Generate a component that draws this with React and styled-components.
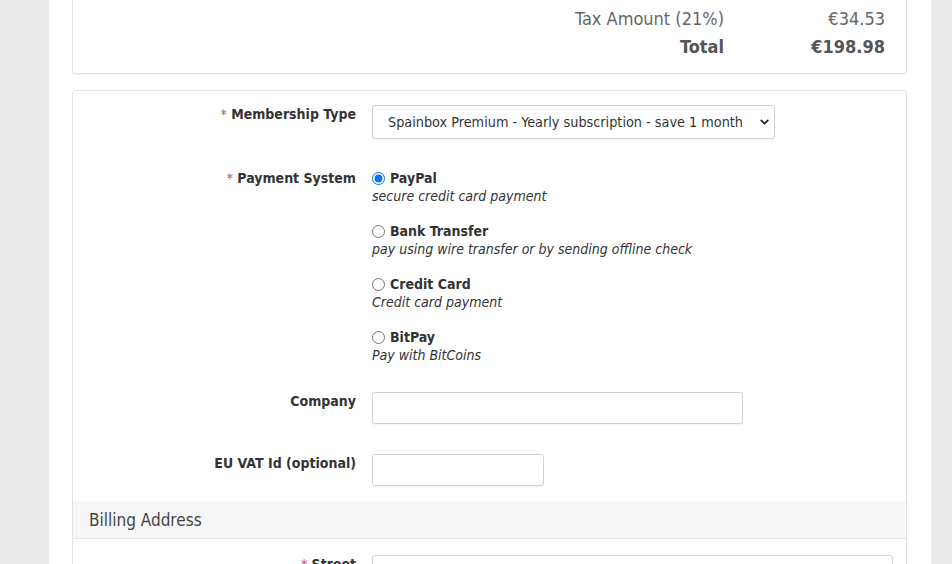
import React from 'react';
import styled, { createGlobalStyle } from 'styled-components';
import { ChevronDown } from 'lucide-react';

const GlobalStyle = createGlobalStyle`
    html, body {
        margin: 0;
        padding: 0;
        background-color: #ebebeb;
    }
    body {
        font-family: 'DejaVu Sans Condensed', 'DejaVu Sans', sans-serif;
        font-stretch: condensed;
        color: #333;
        overflow: hidden;
    }
`;

const summaryRows = [
    { label: 'Subtotal', value: '€164.45' },
    { label: 'Tax Amount (21%)', value: '€34.53' },
    { label: 'Total', value: '€198.98', strong: true },
];

const paymentOptions = [
    { id: 'paypal', title: 'PayPal', desc: 'secure credit card payment', checked: true },
    { id: 'bank', title: 'Bank Transfer', desc: 'pay using wire transfer or by sending offline check' },
    { id: 'cc', title: 'Credit Card', desc: 'Credit card payment' },
    { id: 'bitpay', title: 'BitPay', desc: 'Pay with BitCoins' },
];

const App = () => {
    return (
        <>
            <GlobalStyle />
            <Page>
                <Card>
                    <Summary>
                        {summaryRows.map((row) => (
                            <SummaryRow key={row.label} $strong={row.strong}>
                                <SummaryLabel>{row.label}</SummaryLabel>
                                <SummaryValue>{row.value}</SummaryValue>
                            </SummaryRow>
                        ))}
                    </Summary>
                </Card>

                <Card>
                    <FormBody $top={14}>
                        <FormRow>
                            <Label><Required>*</Required> Membership Type</Label>
                            <SelectWrap>
                                <Select defaultValue="yearly">
                                    <option value="yearly">Spainbox Premium - Yearly subscription - save 1 month</option>
                                    <option value="monthly">Spainbox Premium - Monthly subscription</option>
                                </Select>
                                <SelectArrow>
                                    <ChevronDown size={13} strokeWidth={3.2} />
                                </SelectArrow>
                            </SelectWrap>
                        </FormRow>

                        <FormRow>
                            <Label><Required>*</Required> Payment System</Label>
                            <OptionList>
                                {paymentOptions.map((opt) => (
                                    <Option key={opt.id}>
                                        <OptionTitle>
                                            <Radio type="radio" name="paysys" defaultChecked={opt.checked} />
                                            {opt.title}
                                        </OptionTitle>
                                        <OptionDesc>{opt.desc}</OptionDesc>
                                    </Option>
                                ))}
                            </OptionList>
                        </FormRow>

                        <FormRow>
                            <Label>Company</Label>
                            <TextInput type="text" $width={371} />
                        </FormRow>

                        <FormRow>
                            <Label>EU VAT Id (optional)</Label>
                            <TextInput type="text" $width={172} />
                        </FormRow>
                    </FormBody>

                    <SectionHeading>Billing Address</SectionHeading>

                    <FormBody $top={16}>
                        <FormRow>
                            <Label><Required>*</Required> Street</Label>
                            <TextInput type="text" $width={521} />
                        </FormRow>
                    </FormBody>
                </Card>
            </Page>
        </>
    );
};
export default App;

const Page = styled.div`
    width: 882px;
    margin-left: 49px;
    margin-top: -25px;
    min-height: 700px;
    padding: 0 24px 0 23px;
    box-sizing: border-box;
    background-color: #fff;
    display: flex;
    flex-direction: column;
    gap: 16px;
`;
const Card = styled.div`
    border: 1px solid #e2e2e2;
    border-radius: 3px;
    box-shadow: 0 1px 1px rgba(0, 0, 0, 0.04);
    background-color: #fff;
`;
const Summary = styled.div`
    display: flex;
    flex-direction: column;
    padding: 0 21px 13px 0;
`;
const SummaryRow = styled.div`
    display: grid;
    grid-template-columns: 1fr 161px;
    height: 28px;
    align-items: center;
    font-size: 18px;
    color: ${(p) => (p.$strong ? '#555' : '#666')};
    font-weight: ${(p) => (p.$strong ? 700 : 400)};
`;
const SummaryLabel = styled.div`
    text-align: right;
`;
const SummaryValue = styled.div`
    text-align: right;
`;
const FormBody = styled.div`
    display: flex;
    flex-direction: column;
    gap: 30px;
    padding: ${(p) => p.$top}px 14px 15px 0;
`;
const FormRow = styled.div`
    display: grid;
    grid-template-columns: 283px 1fr;
    column-gap: 16px;
    align-items: start;
`;
const Label = styled.label`
    text-align: right;
    font-size: 14px;
    font-weight: 700;
    line-height: 18px;
    color: #333;
    white-space: nowrap;
`;
const Required = styled.span`
    color: #c0504d;
    font-weight: 400;
`;
const SelectWrap = styled.div`
    position: relative;
    width: 403px;
`;
const Select = styled.select`
    appearance: none;
    width: 100%;
    height: 34px;
    padding: 0 30px 0 15px;
    border: 1px solid #d2d2d2;
    border-radius: 3px;
    background-color: #fff;
    box-shadow: 0 1px 2px rgba(0, 0, 0, 0.06);
    font-family: inherit;
    font-stretch: condensed;
    font-size: 14.3px;
    color: #333;
    outline: none;
`;
const SelectArrow = styled.span`
    position: absolute;
    right: 4px;
    top: 50%;
    transform: translateY(-50%);
    display: flex;
    color: #222;
    pointer-events: none;
`;
const OptionList = styled.div`
    display: flex;
    flex-direction: column;
    gap: 17px;
    margin-bottom: -2px;
`;
const Option = styled.div`
    display: flex;
    flex-direction: column;
`;
const OptionTitle = styled.label`
    display: flex;
    align-items: center;
    font-size: 14px;
    font-weight: 700;
    line-height: 18px;
    color: #333;
`;
const Radio = styled.input`
    width: 13px;
    height: 13px;
    margin: 0 5px 0 0;
    accent-color: #0a74e8;
`;
const OptionDesc = styled.div`
    font-size: 14px;
    font-style: italic;
    line-height: 18px;
    color: #333;
`;
const TextInput = styled.input`
    width: ${(p) => p.$width}px;
    height: 32px;
    box-sizing: border-box;
    border: 1px solid #d2d2d2;
    border-radius: 3px;
    box-shadow: 0 1px 2px rgba(0, 0, 0, 0.06);
    outline: none;
`;
const SectionHeading = styled.div`
    background-color: #f7f7f7;
    border-bottom: 1px solid #e2e2e2;
    padding: 0 16px;
    height: 37px;
    display: flex;
    align-items: center;
    font-size: 17px;
    color: #444;
`;
